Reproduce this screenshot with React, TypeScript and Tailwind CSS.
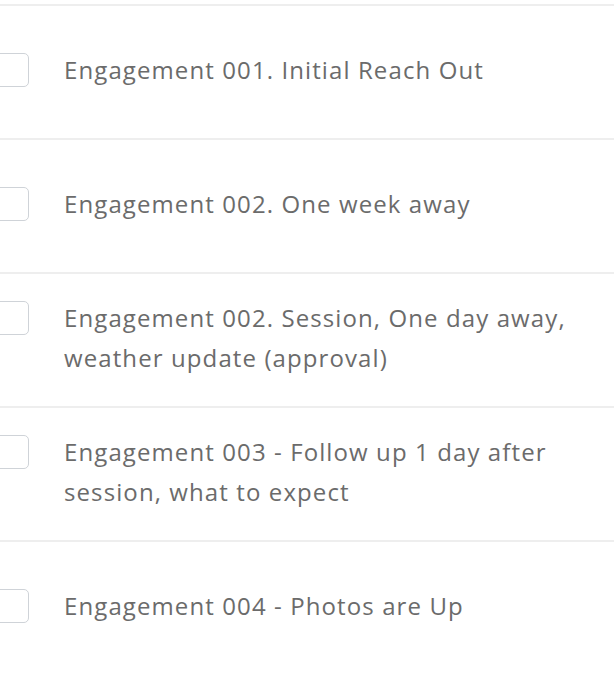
import React from 'react';

type Step = {
  id: number;
  lines: string[];
};

const steps: Step[] = [
  { id: 1, lines: ['Engagement 001. Initial Reach Out'] },
  { id: 2, lines: ['Engagement 002. One week away'] },
  {
    id: 3,
    lines: ['Engagement 002. Session, One day away,', 'weather update (approval)'],
  },
  {
    id: 4,
    lines: ['Engagement 003 - Follow up 1 day after', 'session, what to expect'],
  },
  { id: 5, lines: ['Engagement 004 - Photos are Up'] },
];

const StepRow: React.FC<{ step: Step }> = ({ step }) => (
  <div className="flex h-[134px] items-center border-t-2 border-[#eeeeee] pb-[4px]">
    <div className="flex items-start">
      <div className="mt-[3px] ml-[-5px] h-[34px] w-[34px] shrink-0 rounded-[5px] border-[1.5px] border-[#cfd3d8] bg-white" />
      <p className="ml-[35px] text-[24px] leading-[40px] tracking-[1.1px] text-[#6b6b6b]">
        {step.lines.map((line, i) => (
          <span key={i} className="block whitespace-nowrap">
            {line}
          </span>
        ))}
      </p>
    </div>
  </div>
);

const App: React.FC = () => {
  return (
    <div
      className="min-h-screen overflow-hidden bg-white pt-[4px]"
      style={{ fontFamily: '"Open Sans", "Lato", sans-serif' }}
    >
      {steps.map((step) => (
        <StepRow key={step.id} step={step} />
      ))}
    </div>
  );
};

export default App;
